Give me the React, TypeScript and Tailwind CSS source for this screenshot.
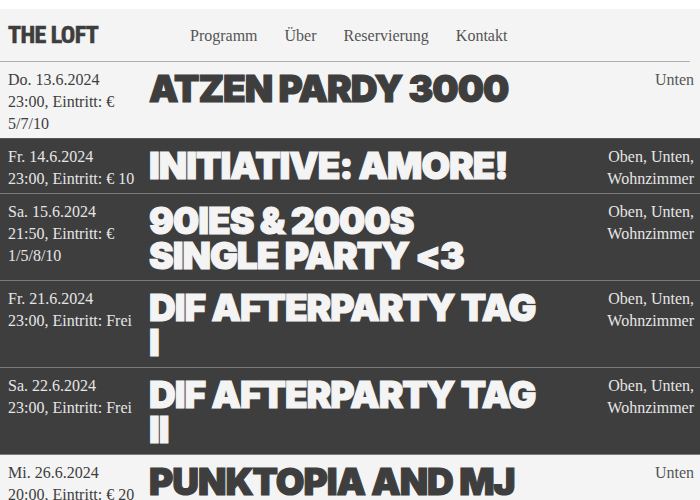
import React from "react";

type Ev = { d: string; info: string[]; title: string; where: string[]; dark: boolean };

const events: Ev[] = [
  { d: "Do. 13.6.2024", info: ["23:00, Eintritt: €", "5/7/10"], title: "ATZEN PARDY 3000", where: ["Unten"], dark: false },
  { d: "Fr. 14.6.2024", info: ["23:00, Eintritt: € 10"], title: "INITIATIVE: AMORE!", where: ["Oben, Unten,", "Wohnzimmer"], dark: true },
  { d: "Sa. 15.6.2024", info: ["21:50, Eintritt: €", "1/5/8/10"], title: "90IES & 2000S SINGLE PARTY <3", where: ["Oben, Unten,", "Wohnzimmer"], dark: true },
  { d: "Fr. 21.6.2024", info: ["23:00, Eintritt: Frei"], title: "DIF AFTERPARTY TAG I", where: ["Oben, Unten,", "Wohnzimmer"], dark: true },
  { d: "Sa. 22.6.2024", info: ["23:00, Eintritt: Frei"], title: "DIF AFTERPARTY TAG II", where: ["Oben, Unten,", "Wohnzimmer"], dark: true },
  { d: "Mi. 26.6.2024", info: ["20:00, Eintritt: € 20"], title: "PUNKTOPIA AND MJ", where: ["Unten"], dark: false },
];

export default function App() {
  return (
    <div className="w-[700px] h-[500px] overflow-hidden bg-white pt-[9px] [font-family:'Liberation_Serif',serif]">
      <div className="bg-[#f4f4f4] h-full">
        <header className="flex items-center h-[53px] mr-[10px] border-b border-[#b0b0b0] pl-[8px]">
          <div className="[font-family:'Roboto_Condensed','DejaVu_Sans_Condensed',sans-serif] font-bold text-[24px] tracking-[-0.6px] text-[#3d3d3d] leading-none w-[182px] [-webkit-text-stroke:0.6px_#3d3d3d]">
            THE LOFT
          </div>
          <nav className="flex gap-[27px] text-[16px] text-[#555] pt-[1px]">
            <span>Programm</span>
            <span>Über</span>
            <span>Reservierung</span>
            <span>Kontakt</span>
          </nav>
        </header>
        {events.map((e, i) => (
          <div
            key={i}
            className={
              "grid grid-cols-[141px_404px_1fr] pt-[7px] pb-[3px] " +
              (e.dark
                ? "bg-[#3e3e3e] text-[#f4f4f4] border-b border-[#7a7a7a]"
                : "bg-[#f4f4f4] text-[#3e3e3e] border-b border-[#555]")
            }
          >
            <div className={"pl-[8px] text-[16px] leading-[22px] " + (e.dark ? "text-[#e6e6e6]" : "text-[#3e3e3e]")}>
              <div>{e.d}</div>
              {e.info.map((l, j) => (
                <div key={j}>{l}</div>
              ))}
            </div>
            <div
              className={
                "[font-family:Inter,sans-serif] font-black text-[37px] leading-[35px] tracking-[-1px] mb-[4px] pt-[2px] pl-[8px] " +
                (e.dark ? "[-webkit-text-stroke:1.2px_#f4f4f4]" : "[-webkit-text-stroke:1.2px_#3e3e3e]")
              }
            >
              {e.title}
            </div>
            <div className={"text-right pr-[6px] text-[16px] leading-[22px] " + (e.dark ? "text-[#e6e6e6]" : "text-[#555]")}>
              {e.where.map((l, j) => (
                <div key={j}>{l}</div>
              ))}
            </div>
          </div>
        ))}
      </div>
    </div>
  );
}
